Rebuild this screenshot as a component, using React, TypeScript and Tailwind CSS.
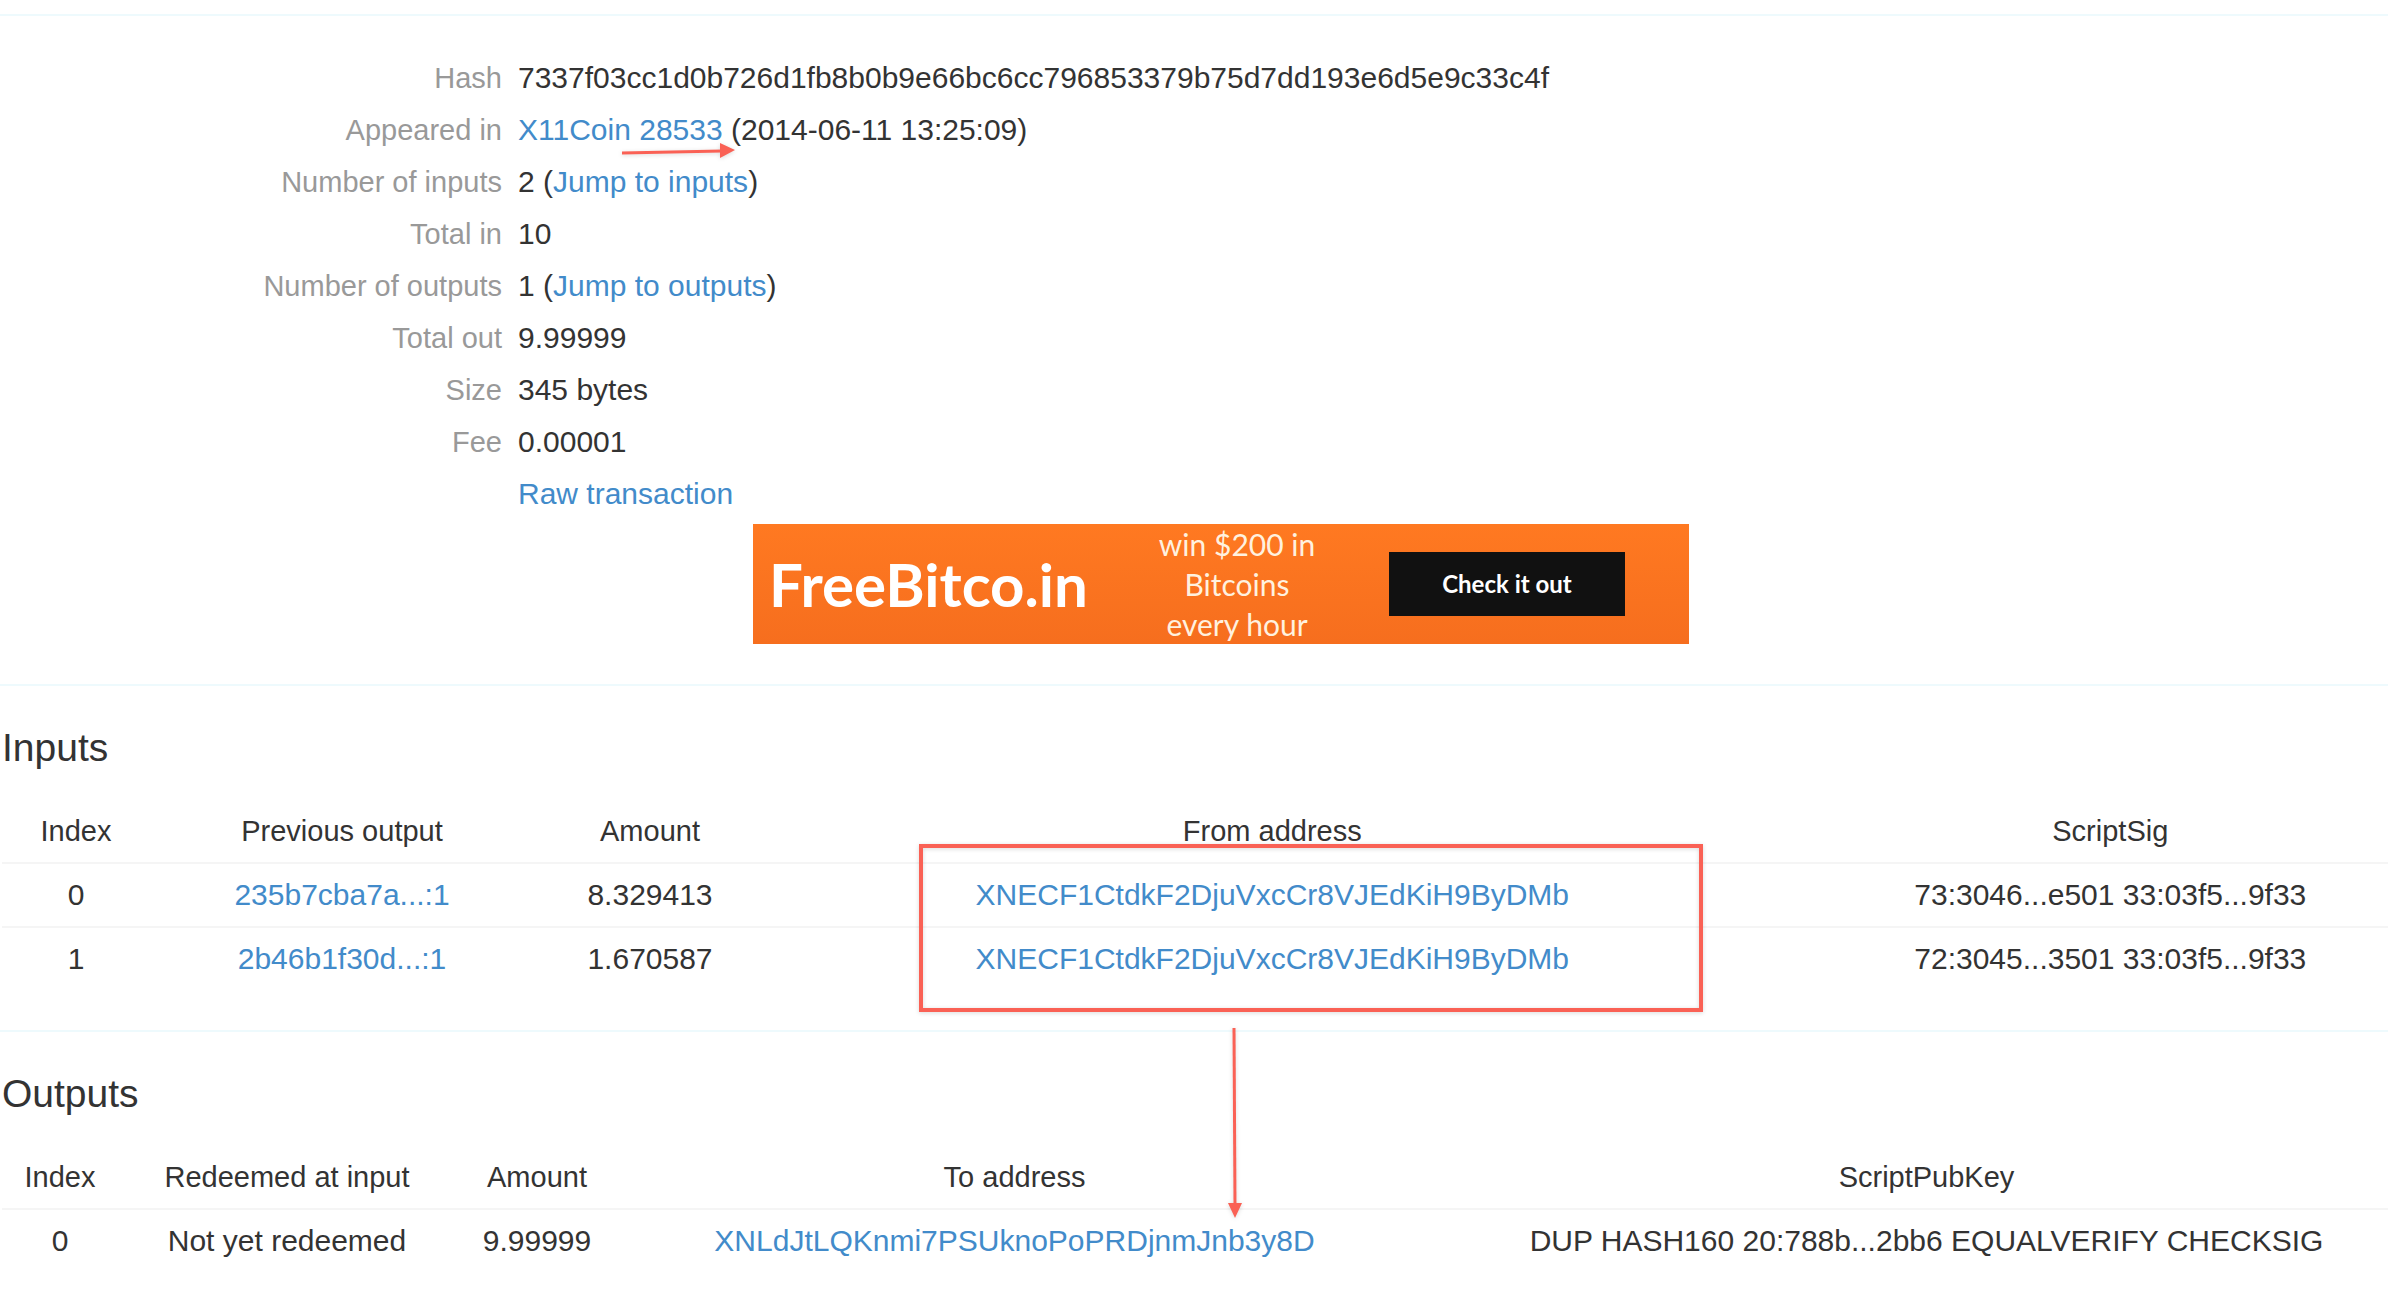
import type { ReactNode } from "react";

const HASH = "7337f03cc1d0b726d1fb8b0b9e66bc6cc796853379b75d7dd193e6d5e9c33c4f";

const INPUTS = [
  {
    index: 0,
    previous: "235b7cba7a...:1",
    amount: "8.329413",
    address: "XNECF1CtdkF2DjuVxcCr8VJEdKiH9ByDMb",
    script: "73:3046...e501 33:03f5...9f33",
  },
  {
    index: 1,
    previous: "2b46b1f30d...:1",
    amount: "1.670587",
    address: "XNECF1CtdkF2DjuVxcCr8VJEdKiH9ByDMb",
    script: "72:3045...3501 33:03f5...9f33",
  },
];

const OUTPUTS = [
  {
    index: 0,
    redeemed: "Not yet redeemed",
    amount: "9.99999",
    address: "XNLdJtLQKnmi7PSUknoPoPRDjnmJnb3y8D",
    script: "DUP HASH160 20:788b...2bb6 EQUALVERIFY CHECKSIG",
  },
];

function Link({ href = "#", children }: { href?: string; children: ReactNode }) {
  return (
    <a href={href} className="text-[#428bca] hover:underline">
      {children}
    </a>
  );
}

function Detail({ label, children }: { label?: string; children: ReactNode }) {
  return (
    <div className="grid grid-cols-[500px_1fr] gap-4">
      <dt className="text-right text-[29px] text-[#999999]">{label}</dt>
      <dd>{children}</dd>
    </div>
  );
}

function Divider() {
  return <hr className="border-t-2 border-[#eefafd]" />;
}

function SectionHeading({ id, children }: { id: string; children: ReactNode }) {
  return (
    <h4 id={id} className="mt-10 mb-[30px] text-[39px] leading-[44px]">
      {children}
    </h4>
  );
}

function Th({ className = "", children }: { className?: string; children: ReactNode }) {
  return (
    <th scope="col" className={`py-2.5 text-[29px] font-normal ${className}`}>
      {children}
    </th>
  );
}

function Td({ children }: { children: ReactNode }) {
  return <td className="border-t-2 border-[#f5f5f5] py-2.5">{children}</td>;
}

function Banner() {
  return (
    <div className="mx-auto mt-1 mb-10 flex h-[120px] w-[936px] items-center bg-linear-to-b from-[#ff7921] to-[#f66e1e] pl-4 font-[Lato]">
      <a href="#" className="w-[336px] text-[60px] leading-none font-bold text-white">
        FreeBitco.in
      </a>
      <p className="w-[264px] text-center font-['Liberation_Sans_Narrow',Lato] text-[30px] leading-10 text-[#fff1df]">
        win $200 in Bitcoins
        <br />
        every hour
      </p>
      <button type="button" className="ml-5 h-16 w-[236px] bg-[#111111] text-2xl font-bold text-white">
        Check it out
      </button>
    </div>
  );
}

/* Red marks drawn over the page */
function Annotations() {
  return (
    <>
      <svg
        className="pointer-events-none absolute top-[140px] left-[620px] drop-shadow-sm"
        width="116"
        height="22"
        viewBox="0 0 116 22"
        aria-hidden="true"
      >
        <path d="M2 13 L102 11" stroke="#fa6155" strokeWidth="3" />
        <path d="M100 3 L115 10 L100 18 Z" fill="#fa6155" />
      </svg>
      <div className="pointer-events-none absolute top-[844px] left-[919px] h-[168px] w-[784px] border-4 border-[#fa6155] drop-shadow-sm" />
      <svg
        className="pointer-events-none absolute top-[1028px] left-[1226px] drop-shadow-sm"
        width="18"
        height="192"
        viewBox="0 0 18 192"
        aria-hidden="true"
      >
        <path d="M8 0 L9 177" stroke="#fa6155" strokeWidth="3" />
        <path d="M2 175 L16 175 L9 190 Z" fill="#fa6155" />
      </svg>
    </>
  );
}

export default function App() {
  return (
    <div className="relative overflow-hidden bg-white pt-3.5 pb-8 font-['Liberation_Sans',Arial,sans-serif] text-[30px] leading-[42px] text-[#333333]">
      <Divider />

      {/* The content column runs past the right edge of the window */}
      <main className="-mr-[54px]">
        <dl className="mt-9 ml-0.5 leading-[52px]">
          <Detail label="Hash">{HASH}</Detail>
          <Detail label="Appeared in">
            <Link>X11Coin</Link> <Link>28533</Link> (2014-06-11 13:25:09)
          </Detail>
          <Detail label="Number of inputs">
            2 (<Link href="#inputs">Jump to inputs</Link>)
          </Detail>
          <Detail label="Total in">10</Detail>
          <Detail label="Number of outputs">
            1 (<Link href="#outputs">Jump to outputs</Link>)
          </Detail>
          <Detail label="Total out">9.99999</Detail>
          <Detail label="Size">345 bytes</Detail>
          <Detail label="Fee">0.00001</Detail>
          <Detail>
            <Link>Raw transaction</Link>
          </Detail>
        </dl>

        <Banner />
        <Divider />

        <section className="ml-0.5">
          <SectionHeading id="inputs">Inputs</SectionHeading>
          <table aria-labelledby="inputs" className="mb-10 w-full table-fixed text-center">
            <thead>
              <tr>
                <Th className="w-[148px]">Index</Th>
                <Th className="w-[384px]">Previous output</Th>
                <Th className="w-[232px]">Amount</Th>
                <Th className="w-[41.5%]">From address</Th>
                <Th>ScriptSig</Th>
              </tr>
            </thead>
            <tbody>
              {INPUTS.map((row) => (
                <tr key={row.index}>
                  <Td>{row.index}</Td>
                  <Td>
                    <Link>{row.previous}</Link>
                  </Td>
                  <Td>{row.amount}</Td>
                  <Td>
                    <Link>{row.address}</Link>
                  </Td>
                  <Td>{row.script}</Td>
                </tr>
              ))}
            </tbody>
          </table>
        </section>

        <Divider />

        <section className="ml-0.5">
          <SectionHeading id="outputs">Outputs</SectionHeading>
          <table aria-labelledby="outputs" className="w-full table-fixed text-center">
            <thead>
              <tr>
                <Th className="w-[116px]">Index</Th>
                <Th className="w-[338px]">Redeemed at input</Th>
                <Th className="w-[162px]">Amount</Th>
                <Th className="w-[32.5%]">To address</Th>
                <Th>ScriptPubKey</Th>
              </tr>
            </thead>
            <tbody>
              {OUTPUTS.map((row) => (
                <tr key={row.index}>
                  <Td>{row.index}</Td>
                  <Td>{row.redeemed}</Td>
                  <Td>{row.amount}</Td>
                  <Td>
                    <Link>{row.address}</Link>
                  </Td>
                  <Td>{row.script}</Td>
                </tr>
              ))}
            </tbody>
          </table>
        </section>
      </main>

      <Annotations />
    </div>
  );
}
